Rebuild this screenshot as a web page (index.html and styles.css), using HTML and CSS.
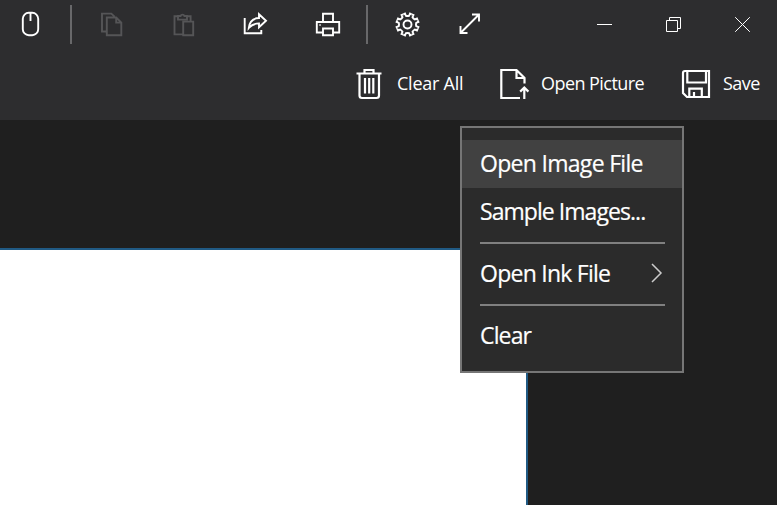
FILE: index.html
```
<!DOCTYPE html>
<html lang="en">
<head>
<meta charset="utf-8">
<title>Ink Canvas</title>
<link rel="stylesheet" href="styles.css">
</head>
<body>
<div class="app">
  <header class="titlebar">
    <svg class="icon mouse" viewBox="0 0 28 28"><rect x="6.800" y="2.800" width="15.400" height="22.400" rx="6"/><path d="M14.500 3v8"/></svg>
    <span class="divider"></span>
    <div class="group edit">
      <svg class="icon dim" viewBox="0 0 28 28"><path d="M8.500 21.500H4V3.600h9.300l3.300 3M8.800 7.500h9.400l5.100 5.100v12.700H8.800zM18.200 7.500v5.100h5.100"/></svg>
      <svg class="icon dim paste" viewBox="0 0 28 28"><path d="M13 24.400H4.500V6.200h3.400M17 6.200h3.600v5M8 6v3.600h9V6h-2.600a2 2 0 0 0-3.800 0zM13.200 11.600h10v13.600h-10z"/></svg>
      <svg class="icon share" viewBox="0 0 28 28"><path d="M3.700 8v15.200h16.600V20M18 4.200l7 6.500-7 6.500v-3.800c-4.500 0-7.500 1.400-10.200 4.600C8.400 12.200 12 8.200 18 8z"/></svg>
      <svg class="icon print" viewBox="0 0 28 28"><path d="M9 12V3.700h10V12M9 22.500H2.800V12h22.400v10.500H19M9 18.500h10v6.800H9z"/><path class="solid" d="M5.300 14.300h1.500v1.500H5.300z"/></svg>
    </div>
    <span class="divider second"></span>
    <div class="group view">
      <svg class="icon" viewBox="-13.500 -14.500 28 28">
        <defs><path id="notch" d="M-4.200-10.200-2.500-10.900-1.600-8.700Q0-8.200 1.600-8.700L2.500-10.900 4.200-10.200"/></defs>
        <circle r="4"/>
        <use href="#notch"/><use href="#notch" transform="rotate(45)"/><use href="#notch" transform="rotate(90)"/><use href="#notch" transform="rotate(135)"/><use href="#notch" transform="rotate(180)"/><use href="#notch" transform="rotate(225)"/><use href="#notch" transform="rotate(270)"/><use href="#notch" transform="rotate(315)"/>
      </svg>
      <svg class="icon" viewBox="0 0 28 28"><path d="M4.500 23 23 4.500M16 4.500h7v7M4.500 16v7h7"/></svg>
    </div>
    <div class="caption">
      <svg viewBox="0 0 69 50"><path d="M27 24.500h15"/></svg>
      <svg viewBox="0 0 69 50"><path d="M27.500 20.500h11v11h-11zM30.500 20.500v-3h11v11h-3"/></svg>
      <svg viewBox="0 0 69 50"><path d="m27.200 17.200 14.600 14.600m0-14.600L27.200 31.800"/></svg>
    </div>
  </header>

  <nav class="commands">
    <div class="command clear">
      <svg viewBox="0 0 28 32"><path d="M1.500 5.500h25M9.500 5V2h9v3M4.500 6v21.500Q4.500 30 7 30h14.500q2.500 0 2.500-2.500V6M10 10v15.500M14.200 10v15.500M18.300 10v15.500"/></svg>
      <span>Clear All</span>
    </div>
    <div class="command open">
      <svg viewBox="0 0 32 32"><path d="M21 30H2.300V2h15.200l8 8v5.500M17.500 2v8h8M25.300 31V19.500M21.200 23.600l4.100-4.100 4.100 4.100"/></svg>
      <span>Open Picture</span>
    </div>
    <div class="command save">
      <svg viewBox="0 0 30 30"><path d="M4 2h24v26H6l-4-4V4q0-2 2-2zM6.300 2v11.500H25V2M8.300 28v-8.300h12.500V28M13 23v4"/></svg>
      <span>Save</span>
    </div>
  </nav>

  <main class="workspace">
    <div class="canvas"></div>
    <div class="menu">
      <div class="item active"><span class="t1">Open Image File</span></div>
      <div class="item"><span class="t2">Sample Images...</span></div>
      <hr>
      <div class="item"><span class="t3">Open Ink File</span><svg viewBox="0 0 12 20"><path d="m1 1 9 9-9 9"/></svg></div>
      <hr>
      <div class="item"><span class="t4">Clear</span></div>
    </div>
  </main>
</div>
</body>
</html>
```
FILE: styles.css
```
* { box-sizing: border-box; }
body { margin: 0; background: #1f1f1f; color: #fff; font-family: "Open Sans", "Noto Sans", sans-serif; }
.app { width: 777px; height: 505px; display: flex; flex-direction: column; overflow: hidden; }
svg { display: block; flex: none; fill: none; stroke: #fff; }

.titlebar { height: 50px; flex: none; display: flex; background: #2d2d2f; }
.icon { width: 28px; height: 28px; margin-top: 10px; stroke-width: 1.9; }
.mouse { margin-left: 16px; }
.dim { stroke: #555557; }
.solid { fill: #fff; stroke: none; }
.divider { width: 2px; height: 39px; margin: 5px 26px 0; background: #68686a; }
.divider.second { margin-left: 24px; }
.group { display: flex; }
.paste { margin-left: 44px; }
.share { margin-left: 43px; }
.print { margin-left: 45px; }
.view { gap: 34px; }
.caption { display: flex; margin-left: auto; }
.caption svg { width: 69px; height: 50px; stroke-width: 1; }

.commands { height: 70px; flex: none; display: flex; justify-content: flex-end; padding: 0 17px 2px 0; background: #2d2d2f; font-size: 18px; }
.command { display: flex; align-items: center; white-space: nowrap; }
.command span { padding-bottom: 2px; }
.command svg { stroke-width: 2.2; }
.clear svg { width: 28px; height: 32px; margin-right: 14px; }
.clear span { width: 66px; letter-spacing: -.25px; }
.open { margin-left: 36px; }
.open svg { width: 32px; height: 32px; margin-right: 10px; }
.open span { width: 104px; letter-spacing: -.55px; }
.save { margin-left: 36px; }
.save svg { width: 30px; height: 30px; margin-right: 12px; }
.save span { width: 37px; letter-spacing: -.5px; }

.workspace { position: relative; flex: 1; background: #1f1f1f; padding-top: 128px; }
.canvas { width: 528px; height: 257px; background: #fff; border: solid #205a84; border-width: 2px 2px 0 0; }
.menu { position: absolute; left: 460px; top: 6px; width: 224px; height: 247px; padding-top: 12px; border: 2px solid #767676; background: #2b2b2b; font-size: 23px; }
.item { height: 48px; padding: 0 19px 0 18px; display: flex; align-items: center; justify-content: space-between; white-space: nowrap; }
.item span { padding-bottom: 2px; -webkit-text-stroke: .2px #fff; }
.item.active { background: #414141; }
.item svg { width: 12px; height: 20px; margin-top: -2px; stroke: #ccc; stroke-width: 1.5; }
.menu hr { height: 2px; margin: 6px 17px 6px 18px; border: 0; background: #808080; }
.t1 { letter-spacing: -.7px; }
.t2 { letter-spacing: -.95px; }
.t3 { letter-spacing: -.75px; }
.t4 { letter-spacing: -.85px; }
```
